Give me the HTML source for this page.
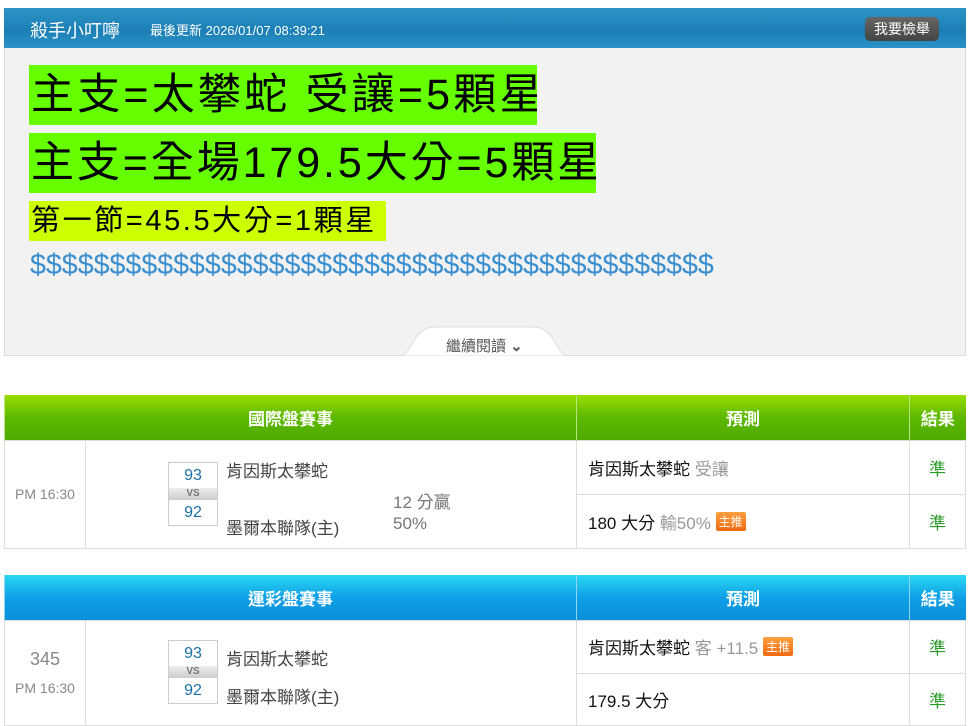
<!DOCTYPE html>
<html><head><meta charset="utf-8"><style>
*{margin:0;padding:0;box-sizing:border-box}
body{width:970px;height:725px;background:#fff;position:relative;overflow:hidden;font-family:"Liberation Sans","Noto Sans CJK TC",sans-serif;color:#333}
.a{position:absolute;white-space:nowrap}
.hd{left:4px;top:8px;width:962px;height:41px;background:linear-gradient(#2d95c8,#1b7fb5 55%,#2a93c8);}
.box{left:4px;top:48px;width:962px;height:308px;background:#f2f2f2;border:1px solid #ddd;border-top:none}
.hl{background:#66ff00;color:#000;font-size:43px;line-height:60px;padding-left:2px;overflow:hidden;letter-spacing:3.2px}
.btn{left:865px;top:17px;width:74px;height:24px;background:linear-gradient(#666,#444);border-radius:5px;color:#fff;font-size:14px;line-height:24px;text-align:center}
table{position:absolute;border-collapse:collapse;left:4px;width:961px;table-layout:fixed}
td{border:1px solid #ddd;text-align:center;vertical-align:middle}
th{color:#fff;font-size:17px;font-weight:bold;height:45px;border-left:1px solid #b8e67a}
.g th{background:linear-gradient(#99dd00,#5cb800 50%,#4fac00)}
.b th{background:linear-gradient(#2ad8f2,#0f9fe6 50%,#0a90dc);border-left-color:#8ed6f6}
.sc{position:absolute;width:50px;border:1px solid #ccc;background:#fff;font-size:16px;color:#1a6fa6;text-align:center}
.vs{height:12px;background:linear-gradient(#eee,#ccc);font-size:10px;line-height:12px;color:#777;font-weight:bold}
.tm{position:absolute;font-size:17px;color:#444;white-space:nowrap}
.pr{text-align:left;padding-left:11px;font-size:17px;color:#111}
.gr{color:#999}
.ok{color:#2a9a2a;font-size:17px}
.tag{display:inline-block;background:linear-gradient(#ffa040,#f06a10);color:#fff;font-size:12px;padding:1px 3px;border-radius:2px;vertical-align:3px}
</style></head><body>
<div class="a hd"></div>
<div class="a" style="left:30px;top:17px;color:#fff;font-size:18px">殺手小叮嚀</div>
<div class="a" style="left:150px;top:20px;color:#fff;font-size:13px">最後更新 2026/01/07 08:39:21</div>
<div class="a btn">我要檢舉</div>
<div class="a box"></div>
<div class="a hl" style="left:29px;top:65px;width:508px">主支=太攀蛇 受讓=5顆星</div>
<div class="a hl" style="left:29px;top:133px;width:567px;letter-spacing:2.9px">主支=全場179.5大分=5顆星</div>
<div class="a hl" style="left:29px;top:201px;width:357px;height:40px;line-height:40px;font-size:29px;background:#ccff00;letter-spacing:2.6px">第一節=45.5大分=1顆星</div>
<div class="a" style="left:30px;top:249px;font-size:28.6px;color:#3a8fd0">$$$$$$$$$$$$$$$$$$$$$$$$$$$$$$$$$$$$$$$$$$$</div>
<svg class="a" style="left:400px;top:325px" width="170" height="31"><path d="M0 31 C12 31 12 2 35 2 L133 2 C156 2 156 31 168 31 Z" fill="#fff" stroke="#ddd"/></svg>
<div class="a" style="left:446px;top:335px;font-size:15px;color:#555">繼續閱讀 <b>⌄</b></div>

<table class="g" style="top:395px">
<colgroup><col style="width:81px"><col style="width:491px"><col style="width:333px"><col style="width:56px"></colgroup>
<tr><th colspan="2">國際盤賽事</th><th>預測</th><th>結果</th></tr>
<tr style="height:54px"><td rowspan="2" style="color:#888;font-size:14px">PM 16:30</td><td rowspan="2"></td><td class="pr">肯因斯太攀蛇 <span class="gr">受讓</span></td><td class="ok">準</td></tr>
<tr style="height:54px"><td class="pr">180 大分 <span class="gr">輸50%</span> <span class="tag">主推</span></td><td class="ok">準</td></tr>
</table>
<div class="sc" style="left:168px;top:462px"><div style="height:25px;line-height:25px">93</div><div class="vs">VS</div><div style="height:25px;line-height:25px">92</div></div>
<div class="tm" style="left:226px;top:457px">肯因斯太攀蛇</div>
<div class="tm" style="left:226px;top:514px">墨爾本聯隊(主)</div>
<div class="tm" style="left:393px;top:488px;color:#777">12 分贏</div>
<div class="tm" style="left:393px;top:514px;color:#777">50%</div>

<table class="b" style="top:575px">
<colgroup><col style="width:81px"><col style="width:491px"><col style="width:333px"><col style="width:56px"></colgroup>
<tr><th colspan="2">運彩盤賽事</th><th>預測</th><th>結果</th></tr>
<tr style="height:53px"><td rowspan="2" style="color:#888;font-size:14px"><div style="font-size:18px;margin-bottom:10px">345</div>PM 16:30</td><td rowspan="2"></td><td class="pr">肯因斯太攀蛇 <span class="gr">客 +11.5</span> <span class="tag">主推</span></td><td class="ok">準</td></tr>
<tr style="height:52px"><td class="pr">179.5 大分</td><td class="ok">準</td></tr>
</table>
<div class="sc" style="left:168px;top:640px"><div style="height:25px;line-height:25px">93</div><div class="vs">VS</div><div style="height:25px;line-height:25px">92</div></div>
<div class="tm" style="left:226px;top:645px">肯因斯太攀蛇</div>
<div class="tm" style="left:226px;top:683px">墨爾本聯隊(主)</div>
</body></html>
